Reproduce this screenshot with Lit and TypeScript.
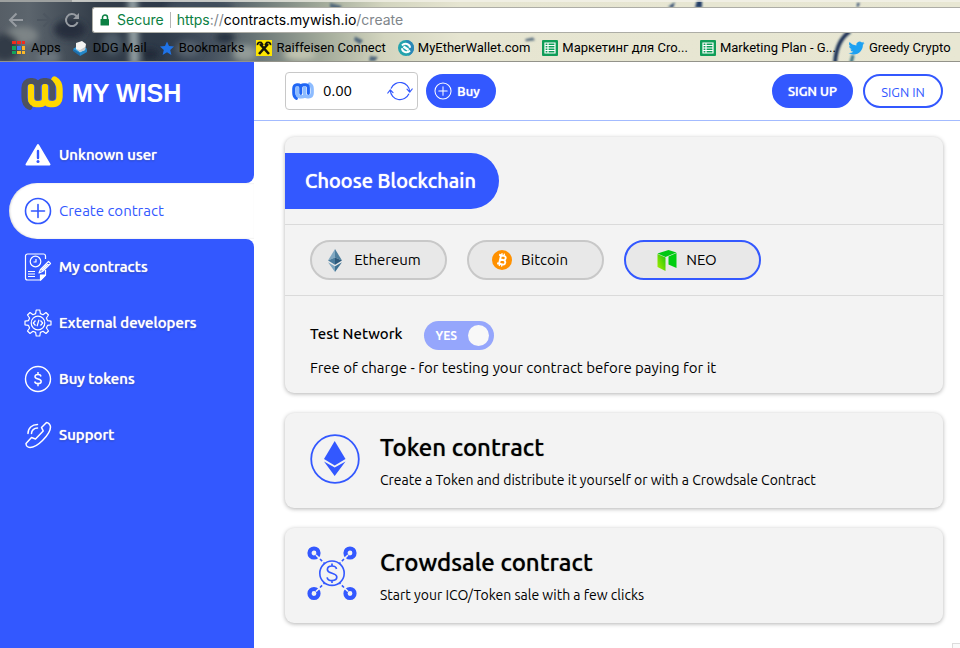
import { LitElement, html, css, svg, nothing } from "lit";
import { customElement, state } from "lit/decorators.js";
import { classMap } from "lit/directives/class-map.js";

const arrowLeft = svg`<svg width="16" height="16" viewBox="0 0 16 16" fill="none" stroke="currentColor" stroke-width="2"><path d="M15 8H2.500M8.500 1.500L2 8l6.500 6.500"/></svg>`;
const arrowRight = svg`<svg width="16" height="16" viewBox="0 0 16 16" fill="none" stroke="currentColor" stroke-width="2"><path d="M1 8h12.500M7.500 1.500L14 8l-6.500 6.500"/></svg>`;
const reload = svg`<svg width="16" height="16" viewBox="0 0 16 16" fill="none" stroke="currentColor" stroke-width="2"><path d="M13.600 10.200A6 6 0 1 1 12.200 3.800L14 5.600"/><path d="M15 1v6H9z" fill="currentColor" stroke="none"/></svg>`;
const lock = svg`<svg width="10" height="12" viewBox="0 0 10 12"><path d="M2.500 5V3.500a2.500 2.500 0 0 1 5 0V5" fill="none" stroke="#0b8043" stroke-width="1.500"/><rect x="0.500" y="5" width="8.500" height="6.500" rx="0.600" fill="#0b8043"/></svg>`;

const appsIcon = svg`<svg width="16" height="16" viewBox="0 0 16 16"><g fill="#f22b1d"><rect x="1" y="1" width="4" height="3"/><rect x="6" y="1" width="4" height="3"/><rect x="11" y="1" width="3" height="3"/></g><rect x="1" y="6" width="4" height="4" fill="#13a35c"/><rect x="6" y="6" width="4" height="4" fill="#3b78f0"/><rect x="11" y="6" width="3" height="4" fill="#fbb829"/><rect x="1" y="11" width="4" height="3" fill="#13a35c"/><rect x="6" y="11" width="4" height="3" fill="#fbb829"/><rect x="11" y="11" width="3" height="3" fill="#fbb829"/></svg>`;
const mailIcon = svg`<svg width="16" height="16" viewBox="0 0 16 16"><path d="M0 9l8-5 6 5-7 5z" fill="#2f9bdc"/><path d="M0 9l7 4v3L0 11z" fill="#1d6fae"/><path d="M7 13l7-4v3l-7 4z" fill="#2587c8"/><path d="M3 3l6-2 4 3-1 6-5 2-4-3z" fill="#f4f4f2"/><path d="M3 9l4 1 5-3v3l-5 2z" fill="#c4c9cd"/></svg>`;
const starIcon = svg`<svg width="16" height="16" viewBox="0 0 16 16"><path d="M8 1.500l2 4.600 5 .5-3.800 3.300 1.200 5L8 12.300 3.600 14.900l1.200-5L1 6.600l5-.5z" fill="#1f73e8"/></svg>`;
const raiffIcon = svg`<svg width="16" height="16" viewBox="0 0 16 16"><rect width="16" height="16" fill="#fee600"/><path d="M3 14L12 4M13 14L4 4" stroke="#16160a" stroke-width="2.600"/><path d="M1.500 5.200C1.200 3.200 3 1.800 5.200 2.600L7 5M14.500 5.200C14.800 3.200 13 1.800 10.800 2.600L9 5" fill="none" stroke="#16160a" stroke-width="1.800"/></svg>`;
const mewIcon = svg`<svg width="16" height="16" viewBox="0 0 16 16"><circle cx="8" cy="8" r="8" fill="#23a3ad"/><path d="M8 0a8 8 0 0 1 8 8c0 4-3 7-6 8 3-3 3-8 0-10z" fill="#2b86b8"/><path d="M4 5.500c2.500-3 8-1.500 8 2.200M12 10.500c-2.500 3-8 1.500-8-2.200" fill="none" stroke="#fff" stroke-width="2"/><path d="M5.500 6.500l5 3.500" stroke="#fff" stroke-width="2.400"/></svg>`;
const sheetIcon = svg`<svg width="16" height="16" viewBox="0 0 16 16"><rect width="16" height="16" rx="1" fill="#0f9d58"/><path d="M3 3h10v10H3zM3 5.500h10M3 8h10M3 10.500h10M6 3v10" fill="none" stroke="#fff" stroke-width="1.200"/></svg>`;
const twitterIcon = svg`<svg width="17" height="16" viewBox="0 0 24 24"><path d="M23.950 4.570a10 10 0 0 1-2.820.77 4.960 4.960 0 0 0 2.160-2.720c-.95.560-2 .960-3.130 1.180a4.920 4.920 0 0 0-8.380 4.480C7.690 8.090 4.070 6.130 1.640 3.160a4.920 4.920 0 0 0 1.520 6.570 4.900 4.900 0 0 1-2.230-.61v.06a4.920 4.920 0 0 0 3.950 4.830 5 5 0 0 1-2.210.08 4.940 4.940 0 0 0 4.600 3.420A9.870 9.870 0 0 1 0 19.540a14 14 0 0 0 7.550 2.210c9.050 0 14-7.500 14-13.980 0-.21 0-.42-.02-.63a9.940 9.940 0 0 0 2.460-2.550z" fill="#1da1f2"/></svg>`;

// Interlocked "m" and "w" strokes, each in its own colour.
const brandMark = (m: string, w: string, width: number, height: number) => svg`<svg width=${width} height=${height} viewBox="0 0 42 34" fill="none" stroke-width="6.400" stroke-linecap="round" stroke-linejoin="round">
  <path d="M10 11V22c0 4 2 6 5 6h4c3 0 5-2 5-5V11M24 22c0 4 2 6 5 6h3c4 0 6.500-3 6.500-7V13c0-4-1.500-7.500-5-9.500" stroke=${w}/>
  <path d="M8.500 31C4.500 29 3.300 26 3.300 21V12c0-4 2.500-7 6-7h2c3.500 0 5.400 2.500 5.400 6V21.500M16.700 11c0-3.500 2.500-6 6-6h2.600c3.500 0 6 2.500 6 6V21.500" stroke=${m} stroke-width="5.800"/>
  <path d="M10 12V22c0 4 2 6 5 6M24 12V23" stroke=${w} stroke-width="5.800"/>
  </svg>`;

const warnIcon = svg`<svg width="28" height="28" viewBox="0 0 28 28"><path d="M14 4L25.500 23.500H2.500z" fill="#fff" stroke="#fff" stroke-width="2" stroke-linejoin="round"/><path d="M14 10v7" stroke="#3358ff" stroke-width="2.400" stroke-linecap="round"/><circle cx="14" cy="20.500" r="1.500" fill="#3358ff"/></svg>`;
const plusIcon = (s: number) => svg`<svg width=${s} height=${s} viewBox="0 0 28 28" fill="none" stroke="currentColor" stroke-width="1.600"><circle cx="14" cy="14" r="12.500"/><path d="M14 7.500v13M7.500 14h13" stroke-linecap="round"/></svg>`;
const contractIcon = svg`<svg width="28" height="28" viewBox="0 0 28 28" fill="none" stroke="#fff" stroke-width="1.200" stroke-linejoin="round"><path d="M21.500 6V3a2 2 0 0 0-2-2H3.500a2 2 0 0 0-2 2v22a2 2 0 0 0 2 2h13l5-5v-5"/><path d="M16.500 27v-5h5z" fill="#fff"/><circle cx="11.500" cy="8.500" r="5.300"/><path d="M12 6v3H9.500M4 18.500h7M4 21h7M4 23.500h7"/><path d="M15 20l1.500-3.500 8-8 2 2-8 8zM22.500 10.500l2 2M17.500 17.500l6-6"/></svg>`;
const gearIcon = svg`<svg width="28" height="28" viewBox="0 0 28 28" fill="none" stroke="#fff" stroke-width="1.200" stroke-linejoin="round"><path d="M12.200 1h3.600l.6 3.600 2.600 1.100 3-2.200 2.500 2.500-2.100 3 1.100 2.600 3.500.6v3.600l-3.500.6-1.100 2.600 2.100 3-2.500 2.500-3-2.200-2.600 1.100-.6 3.600h-3.600l-.6-3.600L9 22.300l-3 2.200L3.500 22l2.100-3-1.100-2.600L1 15.800v-3.600l3.500-.6L5.600 9l-2.100-3L6 3.500l3 2.200 2.600-1.100z"/><circle cx="14" cy="14" r="6.800"/><path d="M11.500 11.500L9.300 14l2.200 2.500M16.500 11.500l2.200 2.500-2.200 2.500M15 10.800l-2 6.400"/></svg>`;
const dollarIcon = svg`<svg width="28" height="28" viewBox="0 0 28 28" fill="none" stroke="#fff" stroke-width="1.400"><circle cx="14" cy="14" r="12.500"/><path d="M17 11.500c-.3-1.300-1.400-1.900-3-1.900s-3 .8-3 2.200c0 3 6.200 1.600 6.200 4.600 0 1.400-1.300 2.200-3.200 2.200-1.800 0-3-.7-3.300-2.100M14 7v2.600M14 18.600v2.600" stroke-width="1.500"/></svg>`;
const phoneIcon = svg`<svg width="28" height="28" viewBox="0 0 28 28" fill="none" stroke="#fff" stroke-width="1.500" stroke-linejoin="round" stroke-linecap="round"><path d="M22.500 1.500L17.500 6.500l1.700 3.400L11.500 18l-4-1.500-5.500 6c0 2 1.500 4 4 4 4 0 9-3.500 12.500-7 4-4 8-9.500 8-13.500 0-1.800-2-4.500-4-4.500z"/><path d="M4 12.500C4 7 8 3.500 13.500 3.500M7.500 12.500c0-3 2.500-5.500 6-5.500"/></svg>`;

const refreshIcon = svg`<svg width="26" height="22" viewBox="0 0 26 22" fill="none" stroke="#3358ff" stroke-width="1.200" stroke-linecap="round" stroke-linejoin="round"><path d="M4.200 8.200A9.700 9.700 0 0 1 22.700 11.500M21.800 14A9.700 9.700 0 0 1 3.300 10.500M20 9.200l2.700 3 2.500-3.200M.8 13l2.500-3.200L6 12.600"/></svg>`;

const ethIcon = svg`<svg width="24" height="24" viewBox="0 0 24 24"><path d="M12 1L5 12.500l7-3z" fill="#82a9c2"/><path d="M12 1l7 11.500-7-3z" fill="#4f7f9e"/><path d="M5 12.500l7-3v7.200z" fill="#4b7c9d"/><path d="M19 12.500l-7-3v7.200z" fill="#2d5a7c"/><path d="M5 14.200l7 4V24z" fill="#7fa6bf"/><path d="M19 14.200l-7 4V24z" fill="#3d7192"/></svg>`;
const btcIcon = svg`<svg width="24" height="24" viewBox="0 0 24 24"><circle cx="12" cy="12" r="10" fill="#ff9100"/><g transform="rotate(13 12 12)" fill="none" stroke="#fff" stroke-width="1.900"><path d="M8 7.500h5a2.100 2.100 0 0 1 0 4.300h-3.200M8 16.300h5.500a2.200 2.200 0 0 0 0-4.500H9.800M10 7.500v8.800"/><path d="M10.600 5.300v2M13 5.300v2M10.600 16.500v2M13 16.500v2" stroke-width="1.300"/></g></svg>`;
const neoIcon = svg`<svg width="24" height="24" viewBox="0 0 24 24"><defs><linearGradient id="neo" x1="0" y1="1" x2="1" y2="0"><stop offset="0" stop-color="#aaf000"/><stop offset="1" stop-color="#1fc40c"/></linearGradient></defs><path d="M2.500 6v13l8 4V9.500z" fill="url(#neo)"/><path d="M2.500 5.500L13.500 2l8 2.500L10.500 9z" fill="#00c813"/><path d="M13.500 8.500l8-3.500v15l-8-3.500z" fill="#00ce10"/></svg>`;

const tokenIcon = svg`<svg width="50" height="50" viewBox="0 2 50 50"><circle cx="25" cy="25" r="23.800" fill="none" stroke="#3358ff" stroke-width="1.800"/><path d="M24.700 7l10.800 18-10.800 6.500L14 25z" fill="#3358ff"/><path d="M14 27.500l10.700 6 10.800-6L24.700 42z" fill="#3358ff"/></svg>`;
const crowdIcon = svg`<svg width="50" height="54" viewBox="3 3 50 54" fill="none" stroke="#3358ff"><g stroke-width="4.200"><circle cx="7" cy="7" r="4.500"/><circle cx="43" cy="7" r="4.500"/><circle cx="7" cy="47.500" r="4.500"/><circle cx="43" cy="47.500" r="4.500"/></g><path d="M9 9l9 9M41 9l-9 9M9 45.500l9-9M41 45.500l-9-9" stroke="#f3f3f3" stroke-width="1.600"/><path d="M13 13l4.500 4.500M37 13l-4.500 4.500M13 41.500l4.500-4.500M37 41.500l-4.500-4.500" stroke-width="1.600" stroke-dasharray="3 2"/><circle cx="25" cy="27.200" r="12.200" stroke-width="1.600"/><path d="M29.500 23c-.4-2-2-3-4.500-3s-4.600 1.300-4.600 3.500c0 4.800 9.400 2.800 9.400 7.600 0 2.200-2 3.500-4.800 3.500-2.600 0-4.500-1.100-4.900-3.300M25 17.500V20M25 34.600V37" stroke-width="1.700"/></svg>`;

const wallpaper = svg`<svg class="wallpaper" viewBox="0 0 960 62" preserveAspectRatio="none" aria-hidden="true">
  <defs>
    <linearGradient id="base"><stop offset="0" stop-color="#565e66"/><stop offset=".03" stop-color="#5c656d"/><stop offset=".1" stop-color="#333d49"/><stop offset=".17" stop-color="#2e3a49"/><stop offset=".22" stop-color="#465260"/><stop offset=".27" stop-color="#6c7878"/><stop offset=".34" stop-color="#a5ad9c"/><stop offset=".4" stop-color="#d3d5bf"/><stop offset=".48" stop-color="#e6e5d1"/><stop offset="1" stop-color="#e8e7d3"/></linearGradient>
    <filter id="soft" x="-50%" y="-50%" width="200%" height="200%"><feGaussianBlur stdDeviation="3"/></filter>
    <filter id="fine" x="-50%" y="-50%" width="200%" height="200%"><feGaussianBlur stdDeviation="1"/></filter>
  </defs>
  <rect width="960" height="62" fill="url(#base)"/>
  <g filter="url(#soft)">
    <ellipse cx="22" cy="36" rx="16" ry="9" fill="#7d8486"/><ellipse cx="5" cy="48" rx="14" ry="14" fill="#323b47"/>
    <ellipse cx="70" cy="30" rx="16" ry="10" fill="#252f3c"/><ellipse cx="48" cy="58" rx="12" ry="7" fill="#6c767e"/>
    <path d="M128 -4h9l2 70h-9z" fill="#99a6a8"/><ellipse cx="112" cy="44" rx="10" ry="12" fill="#4d5b68"/>
    <ellipse cx="200" cy="8" rx="34" ry="8" fill="#414e5c"/><ellipse cx="188" cy="50" rx="12" ry="8" fill="#586470"/>
    <ellipse cx="245" cy="54" rx="12" ry="8" fill="#939b98"/><ellipse cx="300" cy="55" rx="16" ry="6" fill="#c3c6b2"/>
    <ellipse cx="150" cy="55" rx="9" ry="6" fill="#202a38"/><ellipse cx="225" cy="38" rx="10" ry="6" fill="#26313f"/>
  </g>
  <g filter="url(#fine)">
    <path d="M330 3l12 3-3 4-9-2zM355 37l8 4-3 4-6-4zM370 57l8 1-3 4h-6zM525 40l8-2 2 3-9 1z" fill="#52697c"/>
    <path d="M668 7l7-5-2 6zM697 0h5v8h-7zM857 3h3l-3 6z" fill="#223d66"/>
    <path d="M850 32C841 38 836 48 835 64" fill="none" stroke="#1c3357" stroke-width="4"/><path d="M853 56l-2 8" stroke="#2e6c7e" stroke-width="3"/>
  </g>
  <rect width="960" height="2" fill="#f3f2e9" opacity=".75"/><rect width="72" height="2" fill="#9da09f"/>
</svg>`;

const bookmarks = [
  { label: "Apps", icon: appsIcon },
  { label: "DDG Mail", icon: mailIcon },
  { label: "Bookmarks", icon: starIcon },
  { label: "Raiffeisen Connect", icon: raiffIcon },
  { label: "MyEtherWallet.com", icon: mewIcon },
  { label: "Маркетинг для Cro...", icon: sheetIcon },
  { label: "Marketing Plan - G...", icon: sheetIcon },
  { label: "Greedy Crypto", icon: twitterIcon },
];

@customElement("browser-chrome")
class BrowserChrome extends LitElement {
  static styles = css`
    :host { display: block; position: relative; height: 62px; box-sizing: border-box; overflow: hidden; font: 13px/16px Roboto, Inter, sans-serif; color: #000; border-bottom: 1px solid #93938a; }
    .wallpaper { position: absolute; inset: 0; width: 100%; height: 100%; }
    svg { display: block; flex: none; }
    .bar { position: relative; display: flex; align-items: center; margin-top: 7px; height: 26px; padding-left: 8px; }
    button { border: 0; background: none; padding: 0; margin-right: 12px; color: #969ba1; }
    button.off { color: #4d5660; }
    .address { flex: 1; align-self: stretch; display: flex; align-items: center; background: #fff; border: 1px solid #adada6; border-right: 0; border-radius: 3px 0 0 3px; padding-left: 7px; font: 14px/16px Inter, Roboto, sans-serif; white-space: nowrap; }
    .secure { color: #0b8043; margin-left: 7px; padding-right: 6px; border-right: 1px solid #b5b5b5; margin-right: 6px; }
    .green { color: #0b8043; }
    .dim { color: #80868b; }
    nav { position: relative; display: flex; gap: 12px; padding: 7px 0 0 11px; white-space: nowrap; }
    a { display: flex; gap: 4px; align-items: center; color: inherit; text-decoration: none; }
  `;
  render() {
    return html`${wallpaper}
      <div class="bar">
        <button aria-label="Back">${arrowLeft}</button>
        <button class="off" aria-label="Forward">${arrowRight}</button>
        <button aria-label="Reload">${reload}</button>
        <div class="address">${lock}<span class="secure">Secure</span><span class="url"><span class="green">https</span><span class="dim">://</span>contracts.mywish.io<span class="dim">/create</span></span></div>
      </div>
      <nav aria-label="Bookmarks">${bookmarks.map((b) => html`<a href="#">${b.icon}<span>${b.label}</span></a>`)}</nav>`;
  }
}

const menu = [
  { label: "Unknown user", icon: warnIcon },
  { label: "Create contract", icon: plusIcon(28), active: true },
  { label: "My contracts", icon: contractIcon },
  { label: "External developers", icon: gearIcon },
  { label: "Buy tokens", icon: dollarIcon },
  { label: "Support", icon: phoneIcon },
];

@customElement("side-menu")
class SideMenu extends LitElement {
  static styles = css`
    :host { display: flex; flex-direction: column; width: 254px; flex: none; background: #fff; color: #fff; }
    svg { display: block; flex: none; }
    .brand { display: flex; align-items: center; gap: 9px; height: 65px; box-sizing: border-box; padding: 0 0 4px 21px; background: #3358ff; font: bold 25px/30px "Liberation Sans", Arial, sans-serif; }
    ul { list-style: none; margin: 0; padding: 0; }
    li { background: #3358ff; }
    li.before { border-bottom-right-radius: 8px; }
    li.after { border-top-right-radius: 8px; }
    li.active { background: linear-gradient(to right, #3358ff 50%, #fff 50%); padding-left: 9px; }
    a { display: flex; align-items: center; gap: 7px; height: 56px; padding-left: 24px; color: #fff; text-decoration: none; font-weight: 500; text-shadow: 0 0 1px #fff, 0 1px 2px rgba(0, 0, 0, 0.3); }
    .active a { padding-left: 15px; background: #fff; border-radius: 28px 0 0 28px; color: #3358ff; font-weight: 400; text-shadow: none; box-shadow: inset 1px 0 2px rgba(0, 0, 0, 0.15); }
    .rest { flex: 1; background: #3358ff; }
  `;
  render() {
    const at = menu.findIndex((m) => m.active);
    return html`<div class="brand">${brandMark("#4d5261", "#ffd800", 42, 34)}<span>MY WISH</span></div>
      <nav><ul>${menu.map((m, i) => html`<li class=${classMap({ active: i === at, before: i === at - 1, after: i === at + 1 })}><a href="#" aria-current=${i === at ? "page" : nothing}>${m.icon}<span>${m.label}</span></a></li>`)}</ul></nav>
      <div class="rest"></div>`;
  }
}

const chains = [
  { id: "eth", label: "Ethereum", icon: ethIcon },
  { id: "btc", label: "Bitcoin", icon: btcIcon },
  { id: "neo", label: "NEO", icon: neoIcon },
];

const contracts = [
  { title: "Token contract", text: "Create a Token and distribute it yourself or with a Crowdsale Contract", icon: tokenIcon },
  { title: "Crowdsale contract", text: "Start your ICO/Token sale with a few clicks", icon: crowdIcon },
];

@customElement("app-root")
class AppRoot extends LitElement {
  @state() chain = "neo";
  @state() testNet = true;

  static styles = css`
    :host { display: flex; flex-direction: column; min-height: 100vh; background: #fff; color: #000; font: 15px/20px Ubuntu, "Noto Sans", sans-serif; }
    svg { display: block; flex: none; overflow: visible; }
    .body { flex: 1; display: flex; }
    .content { flex: 1; min-width: 0; position: relative; }
    header { display: flex; align-items: center; height: 59px; box-sizing: border-box; border-bottom: 1px solid #a3bbff; padding: 0 17px 0 31px; }
    .balance { display: flex; align-items: center; gap: 9px; width: 133px; height: 38px; box-sizing: border-box; border: 1px solid #c8c8c8; border-radius: 4px; padding: 0 4px 0 6px; }
    .amount { flex: 1; }
    .refresh { border: 0; background: none; padding: 0; }
    .btn { display: flex; align-items: center; justify-content: center; box-sizing: border-box; height: 34px; border: 2px solid #3358ff; border-radius: 17px; background: #3358ff; color: #fff; font: 500 13px/16px Ubuntu, "Noto Sans", sans-serif; padding: 0; text-shadow: 0 0 1px #fff; }
    .buy { width: 70px; gap: 5px; margin-left: 8px; padding-right: 8px; }
    .up { width: 81px; margin-left: auto; }
    .in { width: 80px; margin-left: 10px; background: #fff; color: #3358ff; font-weight: 400; padding-top: 2px; text-shadow: none; }
    main { display: flex; flex-direction: column; gap: 20px; padding: 16px 17px 24px 31px; }
    .card { background: #f3f3f3; border-radius: 9px; box-shadow: 0 1px 4px rgba(0, 0, 0, 0.3); }
    .head { padding: 16px 0 15px; border-bottom: 1px solid #dadada; }
    h1 { margin: 0; width: 214px; box-sizing: border-box; padding-left: 20px; background: #3358ff; color: #fff; font-size: 20px; line-height: 56px; font-weight: 500; border-radius: 0 28px 28px 0; white-space: nowrap; text-shadow: 0 0 1px #fff; }
    fieldset { display: flex; gap: 20px; margin: 0; border: 0; border-bottom: 1px solid #dadada; padding: 15px 25px; }
    .chain { position: relative; display: flex; align-items: center; justify-content: center; gap: 7px; box-sizing: border-box; width: 137px; height: 40px; padding-right: 13px; border: 2px solid #c8c8c8; border-radius: 20px; background: #e8e8e8; }
    .chain.on { border-color: #3358ff; }
    .hidden { position: absolute; inset: 0; margin: 0; opacity: 0; }
    .network { padding: 25px 25px 15px; }
    .row { display: flex; gap: 21px; font-weight: 500; line-height: 26px; }
    .toggle { position: relative; display: flex; align-items: center; justify-content: space-between; box-sizing: border-box; width: 70px; height: 29px; border-radius: 15px; background: #95a6fc; color: #fff; padding: 0 5px 0 12px; font: 600 12px/16px Ubuntu, "Noto Sans", sans-serif; }
    .knob { width: 21px; height: 21px; border-radius: 50%; background: #f8f8f8; }
    p { margin: 0; white-space: nowrap; }
    .network p { margin-top: 8px; }
    .contract { display: flex; align-items: center; height: 95px; gap: 20px; padding-left: 25px; color: inherit; text-decoration: none; }
    .about { padding-top: 2px; }
    h2 { margin: 0 0 7px; font-size: 24px; line-height: 30px; font-weight: 500; text-shadow: 0 0 1px rgba(0, 0, 0, 0.6); }
    .small { font-size: 14px; }
    .corner { position: absolute; right: 0; bottom: 0; width: 8px; height: 5px; box-sizing: border-box; border: 1px solid #dcdcdc; border-width: 1px 0 0 1px; background: #fafafa; }
  `;

  render() {
    return html`<browser-chrome></browser-chrome>
      <div class="body">
        <side-menu></side-menu>
        <div class="content">
          <header>
            <div class="balance">${brandMark("#1f66f5", "#8dbcff", 22, 18)}<span class="amount">0.00</span><button class="refresh" aria-label="Refresh balance">${refreshIcon}</button></div>
            <button class="btn buy">${plusIcon(18)}<span>Buy</span></button>
            <button class="btn up">SIGN UP</button>
            <button class="btn in">SIGN IN</button>
          </header>
          <main>
            <section class="card">
              <div class="head"><h1>Choose Blockchain</h1></div>
              <fieldset aria-label="Blockchain">
                ${chains.map((c) => html`<label class=${classMap({ chain: true, on: c.id === this.chain })}><input class="hidden" type="radio" name="chain" .checked=${c.id === this.chain} @change=${() => (this.chain = c.id)} />${c.icon}<span>${c.label}</span></label>`)}
              </fieldset>
              <div class="network">
                <div class="row">
                  <label for="testnet">Test Network</label>
                  <label class="toggle"><input id="testnet" class="hidden" type="checkbox" .checked=${this.testNet} @change=${() => (this.testNet = !this.testNet)} /><span>${this.testNet ? "YES" : "NO"}</span><span class="knob"></span></label>
                </div>
                <p>Free of charge - for testing your contract before paying for it</p>
              </div>
            </section>
            ${contracts.map((c) => html`<a class="card contract" href="#">${c.icon}<div class="about"><h2>${c.title}</h2><p class="small">${c.text}</p></div></a>`)}
          </main>
          <div class="corner"></div>
        </div>
      </div>`;
  }
}
